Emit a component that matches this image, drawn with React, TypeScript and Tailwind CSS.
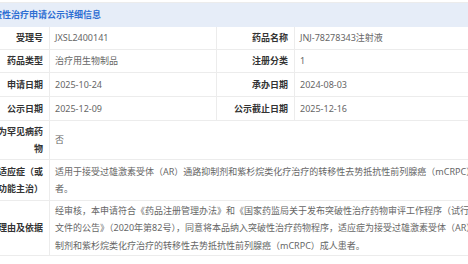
const FONT = {
  fontFamily: '"Noto Sans", "Noto Sans CJK SC", sans-serif',
};

type Pair = { label: string; value: string };

const pairRows: { h: string; left: Pair; right: Pair }[] = [
  {
    h: "h-[23px]",
    left: { label: "受理号", value: "JXSL2400141" },
    right: { label: "药品名称", value: "JNJ-78278343注射液" },
  },
  {
    h: "h-[23px]",
    left: { label: "药品类型", value: "治疗用生物制品" },
    right: { label: "注册分类", value: "1" },
  },
  {
    h: "h-[24px]",
    left: { label: "申请日期", value: "2025-10-24" },
    right: { label: "承办日期", value: "2024-08-03" },
  },
  {
    h: "h-[24px]",
    left: { label: "公示日期", value: "2025-12-09" },
    right: { label: "公示截止日期", value: "2025-12-16" },
  },
];

const wideRows: { h: string; label: string; value: string }[] = [
  { h: "h-[39px]", label: "是否为罕见病药物", value: "否" },
  {
    h: "h-[41px]",
    label: "拟定适应症（或功能主治）",
    value:
      "适用于接受过雄激素受体（AR）通路抑制剂和紫杉烷类化疗治疗的转移性去势抵抗性前列腺癌（mCRPC）成人患者。",
  },
  {
    h: "h-[55px]",
    label: "理由及依据",
    value:
      "经审核，本申请符合《药品注册管理办法》和《国家药监局关于发布突破性治疗药物审评工作程序（试行）等三个文件的公告》（2020年第82号），同意将本品纳入突破性治疗药物程序，适应症为接受过雄激素受体（AR）通路抑制剂和紫杉烷类化疗治疗的转移性去势抵抗性前列腺癌（mCRPC）成人患者。",
  },
];

function Label({ text, w }: { text: string; w: string }) {
  return (
    <div
      className={`${w} shrink-0 flex items-center justify-end text-right border-r border-[#ececec] pl-[3px] pr-[6px] font-bold text-[#333333]`}
    >
      {text}
    </div>
  );
}

export default function App() {
  return (
    <div
      className="w-[468px] h-[264px] overflow-hidden bg-white text-[9px] leading-[17.5px]"
      style={FONT}
    >
      <div className="ml-[-25px] w-[537px] mt-[2px] border-t border-[#ececec]">
        {/* Header */}
        <div className="h-[24px] flex items-center pl-[9px] bg-[#e6edf8] font-bold text-[#2f6fd3]">
          突破性治疗申请公示详细信息
        </div>

        {pairRows.map((row) => (
          <div
            key={row.left.label}
            className={`${row.h} flex border-b border-[#ececec]`}
          >
            <Label text={row.left.label} w="w-[75px]" />
            <div className="w-[167px] shrink-0 flex items-center pl-[5px] border-r border-[#ececec] text-[#666666]">
              {row.left.value}
            </div>
            <Label text={row.right.label} w="w-[78px]" />
            <div className="flex-1 flex items-center pl-[5px] text-[#666666]">
              {row.right.value}
            </div>
          </div>
        ))}

        {wideRows.map((row) => (
          <div
            key={row.label}
            className={`${row.h} flex border-b border-[#ececec]`}
          >
            <Label text={row.label} w="w-[75px]" />
            <div className="flex-1 flex items-center px-[5px] text-[#666666]">
              <p>{row.value}</p>
            </div>
          </div>
        ))}
      </div>
    </div>
  );
}
